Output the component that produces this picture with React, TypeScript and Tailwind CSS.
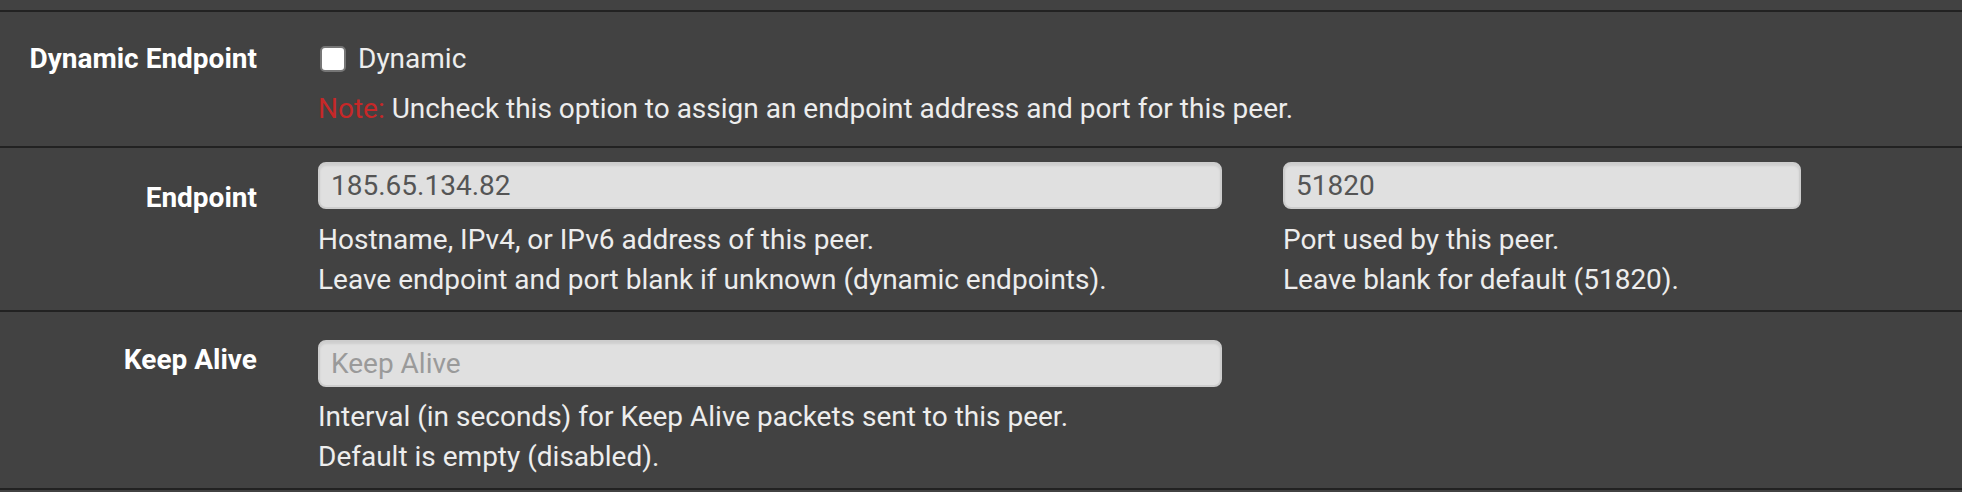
import type { ReactNode } from "react";

function RowLabel({ children, top }: { children: ReactNode; top: string }) {
  return (
    <div className={`w-[257px] shrink-0 text-right font-bold text-white ${top}`}>
      {children}
    </div>
  );
}

function TextInput({ value, placeholder, width }: { value?: string; placeholder?: string; width: string }) {
  return (
    <input
      readOnly
      value={value ?? ""}
      placeholder={placeholder}
      className={`${width} h-[47px] rounded-[8px] border-2 border-[#cdcdcd] bg-[#e0e0e0] pl-[11px] text-[28px] text-[#555555] placeholder:text-[#9a9a9a] shadow-[inset_0_2px_2px_rgba(0,0,0,0.08)] outline-none`}
    />
  );
}

export default function App() {
  return (
    <div className="min-h-screen bg-[#424242] pt-[10px] font-['Roboto',sans-serif] text-[28px] leading-[40px] text-[#ededed]">
      {/* Dynamic Endpoint */}
      <div className="flex h-[136px] border-t-2 border-[#222222]">
        <RowLabel top="pt-[27px]">Dynamic Endpoint</RowLabel>
        <div className="ml-[61px] pt-[27px]">
          <label className="flex h-[40px] items-center">
            <span className="ml-[2px] h-[26px] w-[26px] rounded-[5px] border-2 border-[#767676] bg-white" />
            <span className="ml-[12px]">Dynamic</span>
          </label>
          <p className="mt-[10px]">
            <span className="text-[#c62828]">Note:</span> Uncheck this option to assign an endpoint address and port for this peer.
          </p>
        </div>
      </div>

      {/* Endpoint */}
      <div className="flex h-[164px] border-t-2 border-[#222222]">
        <RowLabel top="pt-[30px]">Endpoint</RowLabel>
        <div className="ml-[61px] w-[904px] pt-[14px]">
          <TextInput value="185.65.134.82" width="w-[904px]" />
          <div className="mt-[11px]">
            <p>Hostname, IPv4, or IPv6 address of this peer.</p>
            <p>Leave endpoint and port blank if unknown (dynamic endpoints).</p>
          </div>
        </div>
        <div className="ml-[61px] w-[518px] pt-[14px]">
          <TextInput value="51820" width="w-[518px]" />
          <div className="mt-[11px]">
            <p>Port used by this peer.</p>
            <p>Leave blank for default (51820).</p>
          </div>
        </div>
      </div>

      {/* Keep Alive */}
      <div className="flex h-[178px] border-t-2 border-[#222222]">
        <RowLabel top="pt-[28px]">Keep Alive</RowLabel>
        <div className="ml-[61px] w-[904px] pt-[28px]">
          <TextInput placeholder="Keep Alive" width="w-[904px]" />
          <div className="mt-[10px]">
            <p>Interval (in seconds) for Keep Alive packets sent to this peer.</p>
            <p>Default is empty (disabled).</p>
          </div>
        </div>
      </div>
      <div className="border-t-2 border-[#222222]" />
    </div>
  );
}
